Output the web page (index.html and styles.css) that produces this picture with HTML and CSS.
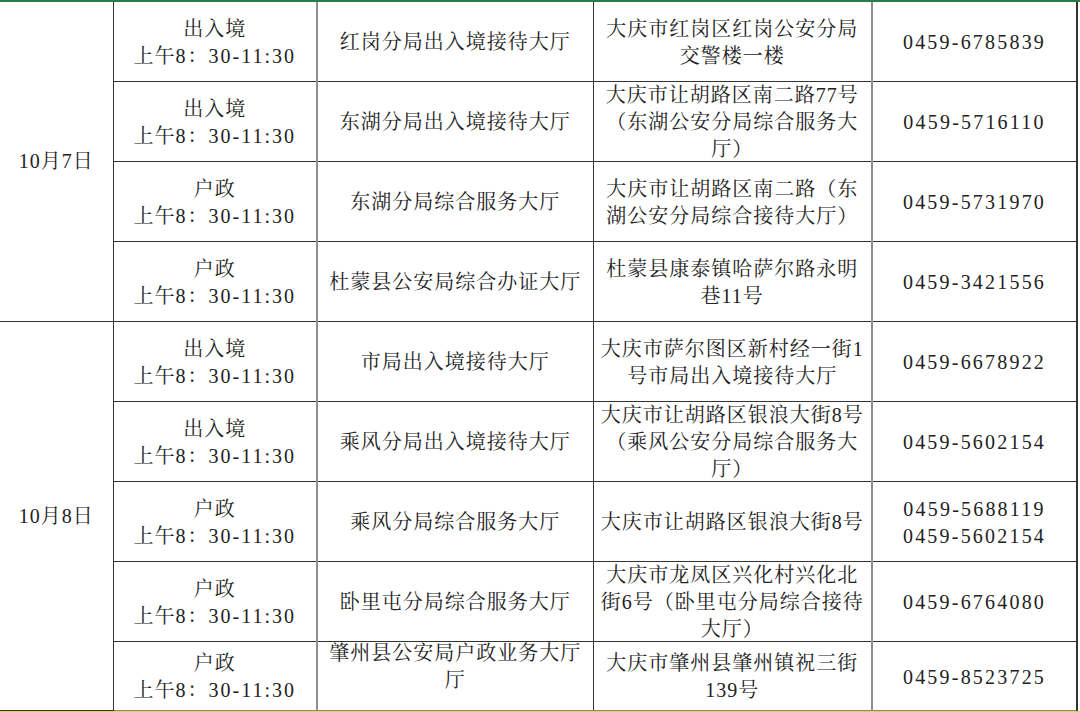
FILE: index.html
```html
<!DOCTYPE html>
<html lang="zh-CN">
<head>
<meta charset="utf-8">
<title>办证大厅时间表</title>
<link rel="stylesheet" href="styles.css">
</head>
<body>
<div class="sheet">
<table class="schedule">
  <colgroup>
    <col class="c-date"><col class="c-type"><col class="c-hall"><col class="c-addr"><col class="c-tel">
  </colgroup>
  <tbody>
    <tr>
      <td class="date" rowspan="4"><div class="cell"><p>10月7日</p></div></td>
      <td class="type"><div class="cell"><p>出入境<br>上午<span class="n">8</span>：<span class="n">30-11:30</span></p></div></td>
      <td class="hall"><div class="cell"><p>红岗分局出入境接待大厅</p></div></td>
      <td class="addr"><div class="cell"><p>大庆市红岗区红岗公安分局<br>交警楼一楼</p></div></td>
      <td class="tel"><div class="cell"><p>0459-6785839</p></div></td>
    </tr>
    <tr>
      <td class="type"><div class="cell"><p>出入境<br>上午<span class="n">8</span>：<span class="n">30-11:30</span></p></div></td>
      <td class="hall"><div class="cell"><p>东湖分局出入境接待大厅</p></div></td>
      <td class="addr"><div class="cell"><p>大庆市让胡路区南二路77号<br>（东湖公安分局综合服务大<br>厅）</p></div></td>
      <td class="tel"><div class="cell"><p>0459-5716110</p></div></td>
    </tr>
    <tr>
      <td class="type"><div class="cell"><p>户政<br>上午<span class="n">8</span>：<span class="n">30-11:30</span></p></div></td>
      <td class="hall"><div class="cell"><p>东湖分局综合服务大厅</p></div></td>
      <td class="addr"><div class="cell"><p>大庆市让胡路区南二路（东<br>湖公安分局综合接待大厅）</p></div></td>
      <td class="tel"><div class="cell"><p>0459-5731970</p></div></td>
    </tr>
    <tr>
      <td class="type"><div class="cell"><p>户政<br>上午<span class="n">8</span>：<span class="n">30-11:30</span></p></div></td>
      <td class="hall"><div class="cell"><p>杜蒙县公安局综合办证大厅</p></div></td>
      <td class="addr"><div class="cell"><p>杜蒙县康泰镇哈萨尔路永明<br>巷11号</p></div></td>
      <td class="tel"><div class="cell"><p>0459-3421556</p></div></td>
    </tr>
    <tr class="group-start">
      <td class="date" rowspan="5"><div class="cell"><p>10月8日</p></div></td>
      <td class="type"><div class="cell"><p>出入境<br>上午<span class="n">8</span>：<span class="n">30-11:30</span></p></div></td>
      <td class="hall"><div class="cell"><p>市局出入境接待大厅</p></div></td>
      <td class="addr"><div class="cell"><p>大庆市萨尔图区新村经一街1<br>号市局出入境接待大厅</p></div></td>
      <td class="tel"><div class="cell"><p>0459-6678922</p></div></td>
    </tr>
    <tr>
      <td class="type"><div class="cell"><p>出入境<br>上午<span class="n">8</span>：<span class="n">30-11:30</span></p></div></td>
      <td class="hall"><div class="cell"><p>乘风分局出入境接待大厅</p></div></td>
      <td class="addr"><div class="cell"><p>大庆市让胡路区银浪大街8号<br>（乘风公安分局综合服务大<br>厅）</p></div></td>
      <td class="tel"><div class="cell"><p>0459-5602154</p></div></td>
    </tr>
    <tr>
      <td class="type"><div class="cell"><p>户政<br>上午<span class="n">8</span>：<span class="n">30-11:30</span></p></div></td>
      <td class="hall"><div class="cell"><p>乘风分局综合服务大厅</p></div></td>
      <td class="addr"><div class="cell"><p>大庆市让胡路区银浪大街8号</p></div></td>
      <td class="tel"><div class="cell"><p>0459-5688119<br>0459-5602154</p></div></td>
    </tr>
    <tr>
      <td class="type"><div class="cell"><p>户政<br>上午<span class="n">8</span>：<span class="n">30-11:30</span></p></div></td>
      <td class="hall"><div class="cell"><p>卧里屯分局综合服务大厅</p></div></td>
      <td class="addr"><div class="cell"><p>大庆市龙凤区兴化村兴化北<br>街6号（卧里屯分局综合接待<br>大厅）</p></div></td>
      <td class="tel"><div class="cell"><p>0459-6764080</p></div></td>
    </tr>
    <tr class="last">
      <td class="type"><div class="cell"><p>户政<br>上午<span class="n">8</span>：<span class="n">30-11:30</span></p></div></td>
      <td class="hall"><div class="cell top"><p>肇州县公安局户政业务大厅<br>厅</p></div></td>
      <td class="addr"><div class="cell"><p>大庆市肇州县肇州镇祝三街<br>139号</p></div></td>
      <td class="tel"><div class="cell"><p>0459-8523725</p></div></td>
    </tr>
  </tbody>
</table>
</div>
</body>
</html>
```

FILE: styles.css
```css
html, body {
  margin: 0;
  padding: 0;
  background: #ffffff;
}
body {
  width: 1080px;
  height: 712px;
  overflow: hidden;
}
.sheet {
  border-top: 2px solid #2b7a4b;
  border-bottom: 1px solid #d9d64a;
  height: 709px;
  overflow: hidden;
}
.schedule {
  width: 1077px;
  border-collapse: collapse;
  table-layout: fixed;
  font-family: "Liberation Serif", "Noto Serif CJK SC", "Noto Sans CJK SC", serif;
  font-size: 20px;
  line-height: 27px;
  letter-spacing: 1px;
  color: #222222;
}
.c-date { width: 113px; }
.c-type { width: 204px; }
.c-hall { width: 276px; }
.c-addr { width: 279px; }
.c-tel { width: 205px; }

.schedule td {
  padding: 0;
  text-align: center;
  vertical-align: middle;
  white-space: nowrap;
  border: 1px solid #333333;
}
.cell {
  height: 79px;
  display: flex;
  flex-direction: column;
  justify-content: center;
  align-items: center;
  padding-top: 2px;
  box-sizing: border-box;
}
.cell p {
  margin: 0;
}
.schedule td.date .cell { height: auto; letter-spacing: 1px; padding-top: 0; }
.schedule tr:first-child td { border-top: none; }
.schedule td:first-child { border-left: none; }
.schedule td.hall,
.schedule td.tel { border-left: 2px solid #8f8f8f; }
.schedule td:last-child { border-right: 2px solid #333333; }
.schedule tr.group-start td { border-top: 1px solid #8f8f8f; }
.schedule tr.last td { border-bottom: 1px solid #8a8a8a; }
.schedule tr.last .cell { height: 68px; }
.schedule tr.last .cell.top {
  justify-content: flex-start;
  padding-top: 0;
  margin-top: -4px;
}
.n { letter-spacing: 2px; }
.tel .cell { letter-spacing: 2.2px; }
```
